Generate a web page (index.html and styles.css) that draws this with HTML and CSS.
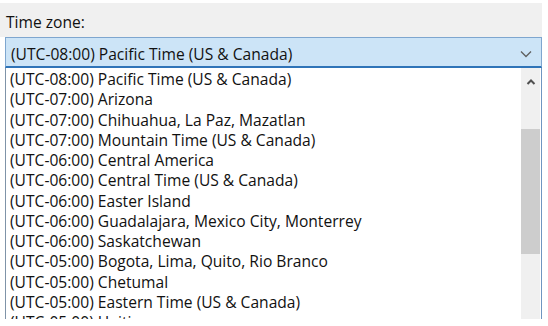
FILE: index.html
```html
<!DOCTYPE html>
<html>
<head>
  <title>Time zone</title>
  <link rel="stylesheet" href="styles.css">
</head>
<body>
  <div class="frame">
    <div class="header"><span>Time zone:</span></div>
    <div class="combo">
      <span class="combo-text">(UTC-08:00) Pacific Time (US &amp; Canada)</span>
      <svg class="chevron" width="12" height="8" viewBox="0 0 12 8">
        <path d="M1 1.5 L6 6.5 L11 1.5" fill="none" stroke="#5f5f5f" stroke-width="1.3"/>
      </svg>
    </div>
    <div class="list">
      <div class="list-items">
        <div class="list-item">(UTC-08:00) Pacific Time (US &amp; Canada)</div>
        <div class="list-item">(UTC-07:00) Arizona</div>
        <div class="list-item">(UTC-07:00) Chihuahua, La Paz, Mazatlan</div>
        <div class="list-item">(UTC-07:00) Mountain Time (US &amp; Canada)</div>
        <div class="list-item">(UTC-06:00) Central America</div>
        <div class="list-item">(UTC-06:00) Central Time (US &amp; Canada)</div>
        <div class="list-item">(UTC-06:00) Easter Island</div>
        <div class="list-item">(UTC-06:00) Guadalajara, Mexico City, Monterrey</div>
        <div class="list-item">(UTC-06:00) Saskatchewan</div>
        <div class="list-item">(UTC-05:00) Bogota, Lima, Quito, Rio Branco</div>
        <div class="list-item">(UTC-05:00) Chetumal</div>
        <div class="list-item">(UTC-05:00) Eastern Time (US &amp; Canada)</div>
        <div class="list-item">(UTC-05:00) Haiti</div>
      </div>
      <div class="scrollbar">
        <div class="scroll-arrow">
          <svg width="10" height="8" viewBox="0 0 10 8">
            <path d="M1.5 6 L5 2.5 L8.5 6" fill="none" stroke="#505050" stroke-width="2"/>
          </svg>
        </div>
        <div class="scroll-track">
          <div class="scroll-thumb"></div>
        </div>
      </div>
    </div>
  </div>
</body>
</html>
```

FILE: styles.css
```css
body {
  margin: 0;
  background: #fff;
  color: #111;
  font-family: "Open Sans", "Noto Sans", sans-serif;
  font-size: 15.6px;
}

.frame {
  width: 542px;
  padding-top: 3px;
}

.header {
  background: #f0f0f0;
  height: 30px;
  padding-left: 6px;
  padding-top: 4px;
  display: flex;
  align-items: center;
}

.combo {
  margin-left: 5px;
  height: 25px;
  padding-top: 3px;
  background: #cce4f7;
  border: 1px solid #7ea6cf;
  border-bottom: 2px solid #2f74b8;
  display: flex;
  align-items: center;
  padding-left: 5px;
  padding-right: 9px;
}
.combo-text {
  flex-grow: 1;
}

.list {
  margin-left: 5px;
  height: 251px;
  border-left: 1px solid #7f93a8;
  border-right: 1px solid #6f95c0;
  display: flex;
  overflow: hidden;
}
.list-items {
  flex-grow: 1;
  padding-left: 4px;
  padding-top: 1px;
  line-height: 20.27px;
}
.list-item {
  white-space: nowrap;
}

.scrollbar {
  width: 19px;
  margin-right: 1px;
  background: #f0f0f0;
  display: flex;
  flex-direction: column;
}
.scroll-arrow {
  height: 24px;
  padding-top: 2px;
  display: flex;
  align-items: center;
  justify-content: center;
}
.scroll-track {
  flex-grow: 1;
  padding-top: 35px;
}
.scroll-thumb {
  height: 125px;
  background: #cdcdcd;
}
```
